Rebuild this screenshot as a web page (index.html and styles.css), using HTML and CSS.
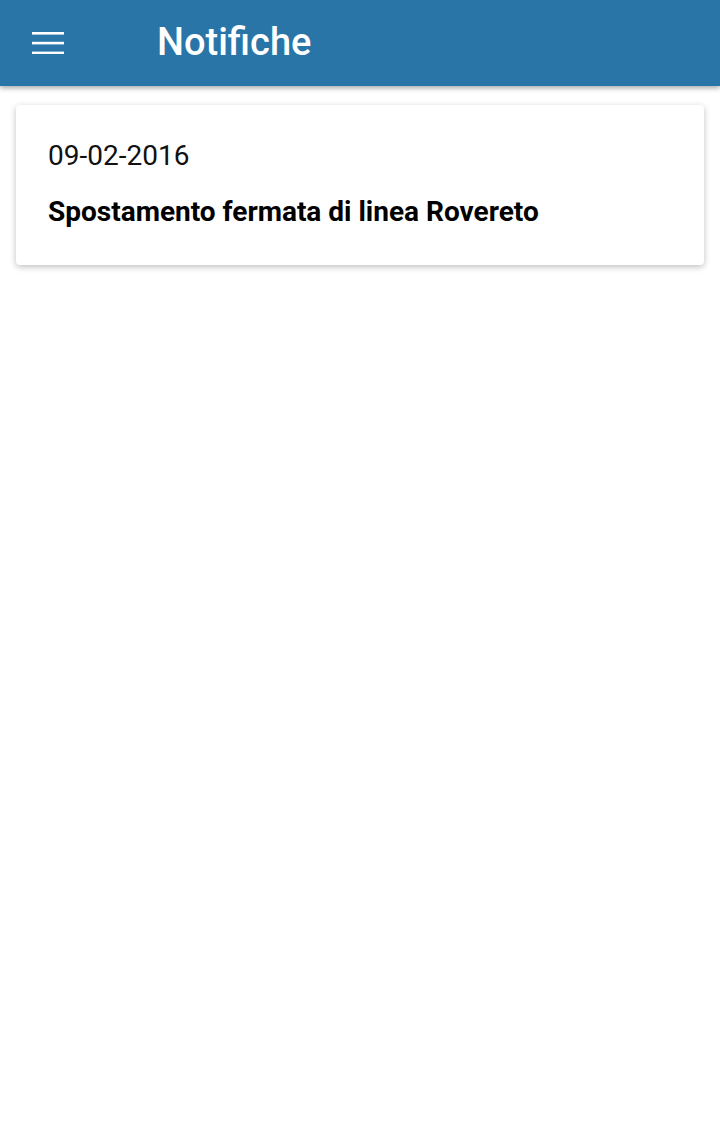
FILE: index.html
```html
<!DOCTYPE html>
<html>
<head>
<meta charset="utf-8">
<link rel="stylesheet" href="styles.css">
</head>
<body>
<header class="topbar">
  <button class="menu-btn" aria-label="menu">
    <svg width="32" height="22" viewBox="0 0 32 22"><rect x="0" y="0" width="32" height="2.6" fill="#fff"/><rect x="0" y="9.8" width="32" height="2.6" fill="#fff"/><rect x="0" y="19.6" width="32" height="2.6" fill="#fff"/></svg>
  </button>
  <h1 class="title">Notifiche</h1>
</header>
<main class="content">
  <div class="card">
    <div class="date">09-02-2016</div>
    <div class="headline">Spostamento fermata di linea Rovereto</div>
  </div>
</main>
</body>
</html>
```
FILE: styles.css
```css
html, body { margin: 0; padding: 0; background: #fff; font-family: Roboto, "Noto Sans", sans-serif; }
.topbar {
  height: 86px;
  background: #2a75a8;
  display: flex;
  align-items: center;
  box-shadow: 0 2px 5px rgba(0,0,0,0.35);
  position: relative;
}
.menu-btn {
  border: 0; background: none; padding: 0;
  margin-left: 32px; width: 32px; height: 22px;
  display: flex; margin-top: 0;
}
.title {
  margin: 0 0 0 93px;
  color: #fff;
  font-size: 38px;
  font-weight: 500;
  margin-top: -2px;
}
.content { padding: 19px 16px; }
.card {
  background: #fff;
  border-radius: 4px;
  box-shadow: 0 2px 6px rgba(0,0,0,0.25);
  padding: 35px 32px 0;
  height: 160px;
  box-sizing: border-box;
}
.date { font-size: 28px; color: #111; line-height: 32px; }
.headline { font-size: 28px; font-weight: 700; color: #000; line-height: 32px; margin-top: 24px; }
```
